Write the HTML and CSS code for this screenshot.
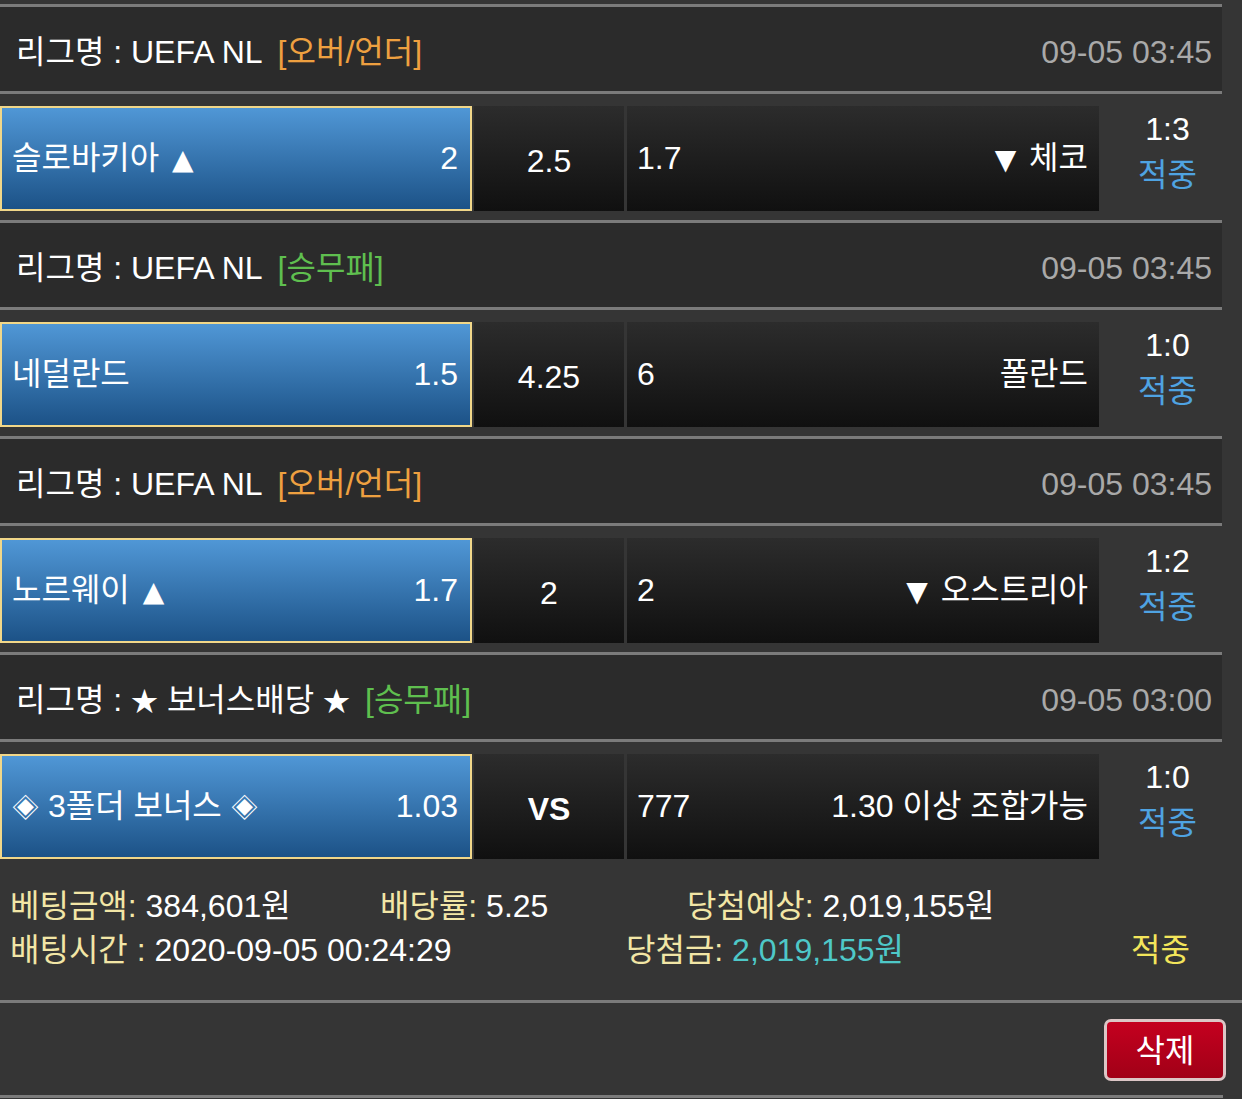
FILE: index.html
```html
<!DOCTYPE html>
<html lang="ko">
<head>
<meta charset="utf-8">
<title>베팅내역</title>
<link rel="stylesheet" href="styles.css">
</head>
<body>
<div class="content">
  <div class="block">
    <div class="league"><span>리그명 : UEFA NL</span><span class="type ou">[오버/언더]</span><span class="date">09-05 03:45</span></div>
    <div class="bet">
      <div class="pick"><span>슬로바키아 <span class="tri up">▲</span></span><span>2</span></div>
      <div class="mid">2.5</div>
      <div class="away"><span>1.7</span><span><span class="tri down">▼</span> 체코</span></div>
      <div class="score"><div>1:3</div><div class="hit">적중</div></div>
    </div>
  </div>
  <div class="block">
    <div class="league"><span>리그명 : UEFA NL</span><span class="type wdl">[승무패]</span><span class="date">09-05 03:45</span></div>
    <div class="bet">
      <div class="pick"><span>네덜란드</span><span>1.5</span></div>
      <div class="mid">4.25</div>
      <div class="away"><span>6</span><span>폴란드</span></div>
      <div class="score"><div>1:0</div><div class="hit">적중</div></div>
    </div>
  </div>
  <div class="block">
    <div class="league"><span>리그명 : UEFA NL</span><span class="type ou">[오버/언더]</span><span class="date">09-05 03:45</span></div>
    <div class="bet">
      <div class="pick"><span>노르웨이 <span class="tri up">▲</span></span><span>1.7</span></div>
      <div class="mid">2</div>
      <div class="away"><span>2</span><span><span class="tri down">▼</span> 오스트리아</span></div>
      <div class="score"><div>1:2</div><div class="hit">적중</div></div>
    </div>
  </div>
  <div class="block">
    <div class="league"><span>리그명 : <span class="star">★</span> 보너스배당 <span class="star">★</span></span><span class="type wdl">[승무패]</span><span class="date">09-05 03:00</span></div>
    <div class="bet">
      <div class="pick"><span><span class="dia">◈</span> 3폴더 보너스 <span class="dia">◈</span></span><span>1.03</span></div>
      <div class="mid vs">VS</div>
      <div class="away"><span>777</span><span>1.30 이상 조합가능</span></div>
      <div class="score"><div>1:0</div><div class="hit">적중</div></div>
    </div>
  </div>
  <div class="info">
    <div class="info-row">
      <div class="c1"><span class="lbl">베팅금액:</span> 384,601원</div>
      <div class="c2"><span class="lbl">배당률:</span> 5.25</div>
      <div><span class="lbl">당첨예상:</span> 2,019,155원</div>
    </div>
    <div class="info-row">
      <div class="c3"><span class="lbl">배팅시간 :</span> 2020-09-05 00:24:29</div>
      <div class="c4"><span class="lbl">당첨금:</span> <span class="win">2,019,155원</span></div>
      <div class="result">적중</div>
    </div>
  </div>
</div>
<div class="actions">
  <button class="del">삭제</button>
</div>
<div class="bottom-line"></div>
</body>
</html>
```

FILE: styles.css
```css
* { box-sizing: border-box; }
html, body {
  margin: 0;
  padding: 0;
  background: #353535;
}
body {
  font-family: "Liberation Sans", "Noto Sans CJK KR", sans-serif;
  color: #fff;
  font-size: 32px;
  line-height: 1.2;
  overflow: hidden;
}
.content {
  width: 1222px;
  padding-top: 4px;
}
.block {
  border-top: 3px solid #7b7b7b;
}
.league {
  height: 87px;
  background: #2b2b2b;
  border-bottom: 3px solid #7b7b7b;
  display: flex;
  align-items: center;
  padding: 6px 10px 0 16px;
  white-space: nowrap;
}
.type { margin-left: 15px; }
.ou { color: #eea040; }
.wdl { color: #5fbf4f; }
.date {
  margin-left: auto;
  color: #a9a9a9;
}
.star { font-size: 27px; }
.dia { font-size: 27px; }
.tri {
  font-family: "DejaVu Sans", sans-serif;
  font-size: 28px;
}
.tri.up { margin-left: 4px; }
.tri.down { margin-right: 4px; }
.bet {
  height: 126px;
  padding: 12px 0 9px;
  display: flex;
}
.pick {
  flex: 0 0 472px;
  border: 2px solid #f1d789;
  background: linear-gradient(#5097d6, #1c5287);
  display: flex;
  align-items: center;
  justify-content: space-between;
  padding: 0 12px 0 10px;
  white-space: nowrap;
}
.mid, .away {
  background: linear-gradient(#2c2c2c, #101010);
  display: flex;
  align-items: center;
}
.mid {
  flex: 0 0 150px;
  margin-left: 2px;
  justify-content: center;
  padding-top: 6px;
}
.mid.vs { font-weight: bold; }
.away {
  flex: 0 0 472px;
  margin-left: 3px;
  justify-content: space-between;
  padding: 0 11px 0 10px;
  white-space: nowrap;
}
.score {
  flex: 0 0 123px;
  padding-left: 14px;
  display: flex;
  flex-direction: column;
  align-items: center;
  justify-content: center;
  line-height: 46px;
  padding-bottom: 14px;
}
.hit { color: #4fa3e2; }
.info {
  padding: 16px 0 28px 10px;
}
.info-row {
  display: flex;
  height: 44px;
  align-items: center;
  white-space: nowrap;
}
.lbl { color: #f2e6a6; }
.c1 { flex: 0 0 370px; }
.c2 { flex: 0 0 307px; }
.c3 { flex: 0 0 616px; }
.c4 { flex: 0 0 505px; }
.win { color: #4ec8c8; }
.result { color: #f3e55b; }
.actions {
  border-top: 3px solid #7b7b7b;
  height: 95px;
  display: flex;
  justify-content: flex-end;
  padding: 16px 16px 0 0;
}
.del {
  width: 122px;
  height: 62px;
  border: 3px solid #dcc6c6;
  border-radius: 7px;
  background: linear-gradient(#c4001f, #a10017);
  color: #fff;
  font-family: "Liberation Sans", "Noto Sans CJK KR", sans-serif;
  font-size: 32px;
  padding: 0 0 4px;
}
.bottom-line {
  width: 1223px;
  height: 3px;
  background: #7b7b7b;
}
```
